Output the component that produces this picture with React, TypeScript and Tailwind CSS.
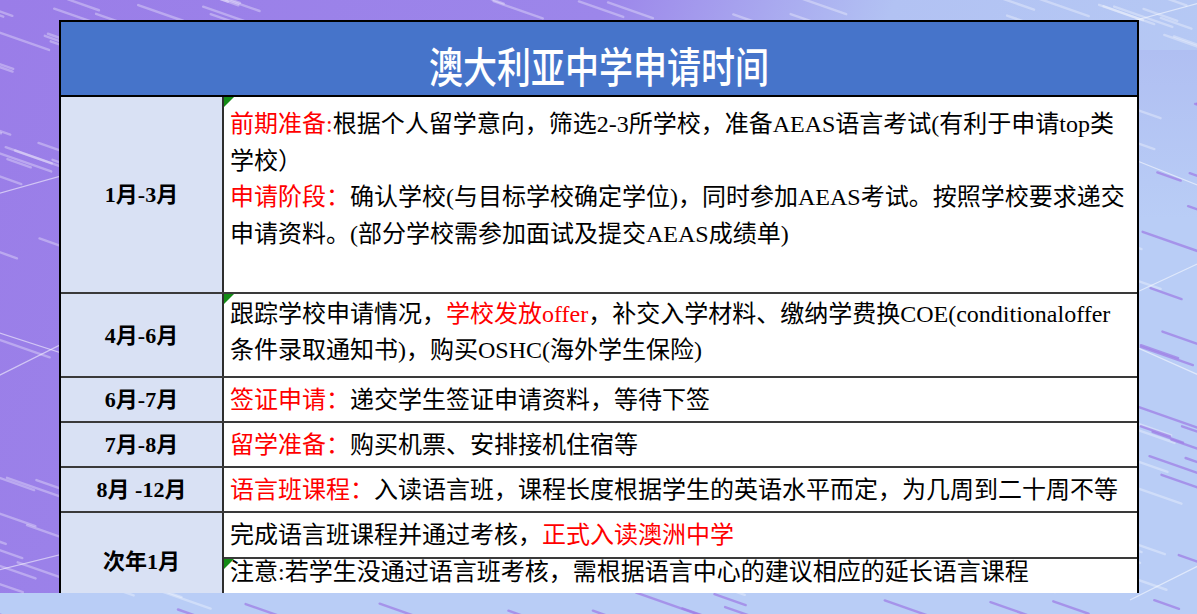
import React from 'react';

// deterministic streak pattern for the slide backdrop
function makeStreaks() {
  let s = 7;
  const r = () => {
    s = (s * 16807) % 2147483647;
    return s / 2147483647;
  };
  const out: { x1: number; y1: number; x2: number; y2: number; blue: boolean }[] = [];
  for (let i = 0; i < 420; i++) {
    const x = r() * 1280 - 60;
    const y = r() * 660 - 30;
    const len = 22 + r() * 48;
    const blue = (x > 1128 && y > 50) || y > 588;
    out.push({ x1: x, y1: y, x2: x + len, y2: y + len * 0.35, blue });
  }
  return out;
}

const STREAKS = makeStreaks();

function Backdrop() {
  return (
    <svg className="absolute inset-0" width="1197" height="614" viewBox="0 0 1197 614">
      {STREAKS.map((l, i) => (
        <line
          key={i}
          x1={l.x1}
          y1={l.y1}
          x2={l.x2}
          y2={l.y2}
          stroke={l.blue ? '#9f7fe6' : '#ffffff'}
          strokeOpacity={l.blue ? 0.75 : 0.32}
          strokeWidth={2.4}
          strokeLinecap="round"
        />
      ))}
      <g stroke="#ffffff" strokeOpacity="0.55" strokeWidth="1.2">
        <line x1="-10" y1="196" x2="260" y2="120" />
        <line x1="-10" y1="330" x2="120" y2="372" />
        <line x1="-10" y1="380" x2="150" y2="300" />
        <line x1="-10" y1="572" x2="200" y2="520" />
        <line x1="1110" y1="150" x2="1210" y2="190" />
        <line x1="1120" y1="300" x2="1210" y2="258" />
        <line x1="1120" y1="340" x2="1210" y2="380" />
        <line x1="1130" y1="600" x2="1210" y2="560" />
        <line x1="1100" y1="30" x2="1210" y2="0" />
      </g>
    </svg>
  );
}

function Mark() {
  return (
    <span className="absolute left-0 top-0 h-0 w-0 border-r-[10px] border-t-[10px] border-r-transparent border-t-[#138a16]" />
  );
}

const Red = ({ children }: { children: React.ReactNode }) => <span className="text-[#ff0000]">{children}</span>;

function DateCell({ children }: { children: React.ReactNode }) {
  return (
    <div className="flex w-[163px] shrink-0 items-center justify-center border-r-2 border-[#2e2e2e] bg-[#d9e1f4] text-[22px] font-bold text-black">
      {children}
    </div>
  );
}

export default function App() {
  return (
    <div className="relative h-[614px] w-[1197px] overflow-hidden bg-[linear-gradient(112deg,#9a7de8_0%,#9c86ea_42%,#b2c2f3_62%,#b8cdf5_100%)] font-['Liberation_Serif','Noto_Sans_CJK_SC',serif]">
      <div className="absolute inset-x-0 bottom-0 h-[21px] bg-[#b9cdf6]" />
      <div className="absolute bottom-0 right-0 top-[50px] w-[60px] bg-[linear-gradient(to_bottom,#b0bff2,#b9cdf6_30%)]" />
      <Backdrop />
      <div className="relative pl-[59px] pt-[20px]">
        <div className="h-[573px] w-[1080px] overflow-hidden border-x-2 border-t-2 border-black">
          <div className="flex h-[75px] items-center justify-center border-b-2 border-black bg-[#4674ca] pt-[12px]">
            <span className="inline-block scale-y-125 font-['Noto_Sans_CJK_SC',sans-serif] text-[34px] font-medium leading-none text-white">
              澳大利亚中学申请时间
            </span>
          </div>

          <div className="flex h-[197px] border-b-2 border-[#3a3a3a]">
            <DateCell>1月-3月</DateCell>
            <div className="relative flex-1 whitespace-nowrap bg-white pl-[6px] pt-[9px] text-[24px] leading-[36.6px] text-black">
              <Mark />
              <Red>前期准备:</Red>根据个人留学意向，筛选2-3所学校，准备AEAS语言考试(有利于申请top类
              <br />
              学校）
              <br />
              <Red>申请阶段：</Red>确认学校(与目标学校确定学位)，同时参加AEAS考试。按照学校要求递交
              <br />
              申请资料。(部分学校需参加面试及提交AEAS成绩单)
            </div>
          </div>

          <div className="flex h-[84px] border-b-2 border-[#3a3a3a]">
            <DateCell>4月-6月</DateCell>
            <div className="relative flex-1 whitespace-nowrap bg-white pl-[6px] pt-[2px] text-[24px] leading-[36.4px] text-black">
              <Mark />
              跟踪学校申请情况，<Red>学校发放offer</Red>，补交入学材料、缴纳学费换COE(conditionaloffer
              <br />
              条件录取通知书)，购买OSHC(海外学生保险)
            </div>
          </div>

          <div className="flex h-[45px] border-b-2 border-[#3a3a3a]">
            <DateCell>6月-7月</DateCell>
            <div className="flex flex-1 items-center whitespace-nowrap bg-white pl-[6px] text-[24px] text-black">
              <span>
                <Red>签证申请：</Red>递交学生签证申请资料，等待下签
              </span>
            </div>
          </div>

          <div className="flex h-[45px] border-b-2 border-[#3a3a3a]">
            <DateCell>7月-8月</DateCell>
            <div className="flex flex-1 items-center whitespace-nowrap bg-white pl-[6px] text-[24px] text-black">
              <span>
                <Red>留学准备：</Red>购买机票、安排接机住宿等
              </span>
            </div>
          </div>

          <div className="flex h-[45px] border-b-2 border-[#3a3a3a]">
            <DateCell>8月 -12月</DateCell>
            <div className="flex flex-1 items-center whitespace-nowrap bg-white pl-[6px] text-[24px] text-black">
              <span>
                <Red>语言班课程：</Red>入读语言班，课程长度根据学生的英语水平而定，为几周到二十周不等
              </span>
            </div>
          </div>

          <div className="flex h-[98px] border-b-2 border-[#3a3a3a]">
            <DateCell>次年1月</DateCell>
            <div className="flex flex-1 flex-col bg-white">
              <div className="flex h-[46px] items-center whitespace-nowrap border-b-2 border-[#3a3a3a] pl-[6px] text-[24px] text-black">
                <span>
                  完成语言班课程并通过考核，<Red>正式入读澳洲中学</Red>
                </span>
              </div>
              <div className="relative flex-1 whitespace-nowrap pl-[6px] text-[24px] leading-[26px] text-black">
                <Mark />
                注意:若学生没通过语言班考核，需根据语言中心的建议相应的延长语言课程
              </div>
            </div>
          </div>
        </div>
      </div>
    </div>
  );
}
